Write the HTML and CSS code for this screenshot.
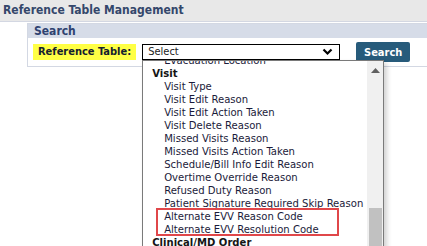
FILE: index.html
```html
<!DOCTYPE html>
<html>
<head>
<meta charset="utf-8">
<link rel="stylesheet" href="styles.css">
</head>
<body>
<div class="header">Reference Table Management</div>
<div class="panel">
  <div class="panel-title">Search</div>
  <div class="row">
    <span class="label">Reference Table:</span>
    <div class="select">
      <span class="select-text">Select</span>
      <svg class="chevron" width="11" height="8" viewBox="0 0 11 8"><path d="M1.5 1.5 L5.5 5.5 L9.5 1.5" fill="none" stroke="#000" stroke-width="2.2"/></svg>
      <div class="dropdown">
        <div class="list">
          <div class="item">Evacuation Location</div>
          <div class="group">Visit</div>
          <div class="item">Visit Type</div>
          <div class="item">Visit Edit Reason</div>
          <div class="item">Visit Edit Action Taken</div>
          <div class="item">Visit Delete Reason</div>
          <div class="item">Missed Visits Reason</div>
          <div class="item">Missed Visits Action Taken</div>
          <div class="item">Schedule/Bill Info Edit Reason</div>
          <div class="item">Overtime Override Reason</div>
          <div class="item">Refused Duty Reason</div>
          <div class="item">Patient Signature Required Skip Reason</div>
          <div class="highlight">
            <div class="item">Alternate EVV Reason Code</div>
            <div class="item">Alternate EVV Resolution Code</div>
          </div>
          <div class="group">Clinical/MD Order</div>
        </div>
        <div class="scrollbar">
          <svg class="arrow" width="9" height="5" viewBox="0 0 9 5"><path d="M0 5 L4.5 0 L9 5 Z" fill="#606060"/></svg>
          <div class="thumb"></div>
        </div>
      </div>
    </div>
    <button class="btn">Search</button>
  </div>
</div>
</body>
</html>
```
FILE: styles.css
```css
html, body {
  margin: 0;
  padding: 0;
  background: #fff;
  overflow: hidden;
  height: 246px;
}
body {
  font-family: "DejaVu Sans Condensed", "DejaVu Sans", sans-serif;
  font-size: 11px;
  color: #1e1e2e;
}
.header {
  height: 21px;
  line-height: 21px;
  background: #e8e8e8;
  border-bottom: 1px solid #d3d7e2;
  padding-left: 3px;
  font-weight: bold;
  font-size: 12px;
  color: #34476b;
}
.panel {
  margin: 1px 0 0 27px;
  border: 1px solid #d3d8e3;
  border-right: none;
  height: 42px;
}
.panel-title {
  height: 14px;
  line-height: 14px;
  background: #d6dce8;
  padding-left: 6px;
  font-weight: bold;
  font-size: 12px;
  color: #2e4270;
}
.row {
  display: flex;
  align-items: center;
  padding-top: 3px;
  padding-left: 5px;
}
.label {
  background: #ffff44;
  font-weight: bold;
  padding: 0 5px 0 5px;
  height: 16px;
  line-height: 16px;
  white-space: nowrap;
  color: #15202e;
}
.select {
  position: relative;
  margin-left: 6px;
  width: 196px;
  height: 14px;
  border: 1px solid #000;
  display: flex;
  align-items: center;
  box-sizing: content-box;
}
.select-text {
  padding-left: 5px;
  flex: 1;
  color: #222;
}
.chevron {
  margin-right: 6px;
}
.btn {
  margin-left: 16px;
  width: 54px;
  height: 20px;
  background: #275b7b;
  border: none;
  border-radius: 2px;
  color: #fff;
  font-family: inherit;
  font-weight: bold;
  font-size: 11px;
  padding: 0;
  margin-top: 1px;
}
.dropdown {
  position: absolute;
  top: 15px;
  left: -1px;
  width: 240px;
  height: 200px;
  border: 1px solid #7a7a7a;
  background: #fff;
  overflow: hidden;
  box-shadow: 3px 3px 5px rgba(0,0,0,0.18);
}
.list {
  margin-top: -7px;
  padding-right: 17px;
  font-size: 11.2px;
}
.item, .group {
  height: 13px;
  line-height: 13px;
  white-space: nowrap;
  color: #1b1b3a;
}
.item {
  padding-left: 21px;
}
.group {
  padding-left: 9px;
  font-weight: bold;
  color: #151515;
}
.highlight {
  position: relative;
}
.highlight::after {
  content: "";
  position: absolute;
  left: 13px;
  width: 179px;
  top: -2px;
  bottom: 0;
  border: 2px solid #e0474a;
}
.scrollbar {
  position: absolute;
  top: 0;
  right: 0;
  width: 16px;
  height: 100%;
  background: #f0f0f0;
}
.arrow {
  position: absolute;
  top: 7px;
  left: 4px;
}
.thumb {
  position: absolute;
  top: 147px;
  left: 2px;
  width: 13px;
  height: 60px;
  background: #c1c1c1;
}
```
